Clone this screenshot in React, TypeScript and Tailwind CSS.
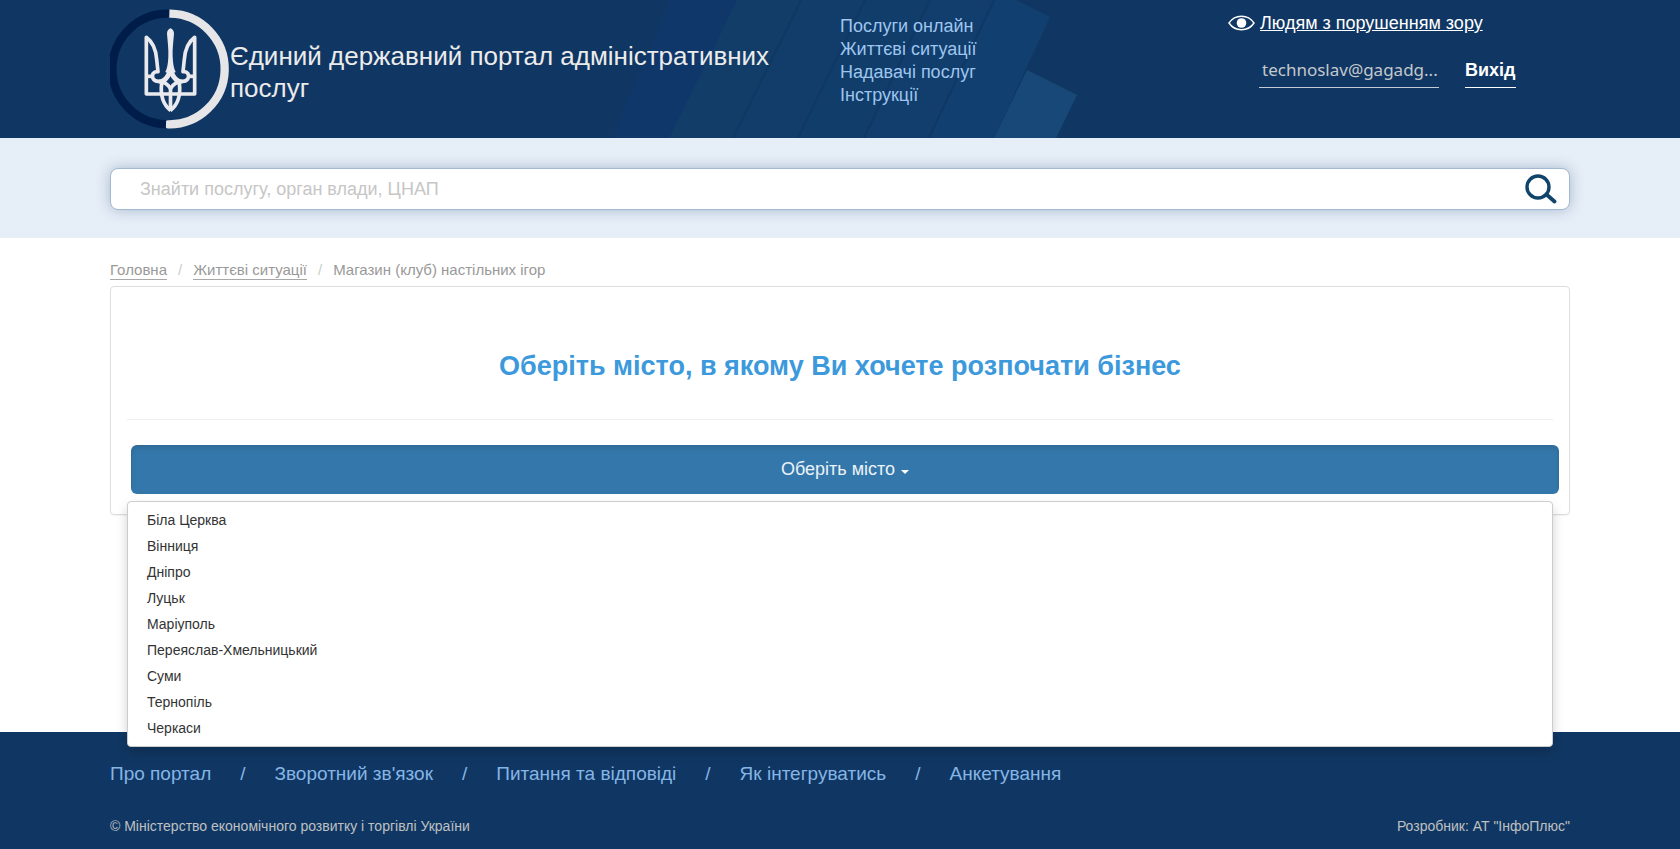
import React, { useState } from 'react'

const headerLinks = [
    'Послуги онлайн',
    'Життєві ситуації',
    'Надавачі послуг',
    'Інструкції',
]

const cities = [
    'Біла Церква',
    'Вінниця',
    'Дніпро',
    'Луцьк',
    'Маріуполь',
    'Переяслав-Хмельницький',
    'Суми',
    'Тернопіль',
    'Черкаси',
]

const footerLinks = [
    'Про портал',
    "Зворотний зв'язок",
    'Питання та відповіді',
    'Як інтегруватись',
    'Анкетування',
]

/* Left half of the trident, the right one is its mirror */
const TridentHalf: React.FC = () => (
    <>
        <path d="M97 216H25V46C44 60 54 86 56 112L60 149C47 147 40 158 45 169C51 181 70 181 81 170C91 159 97 144 97 130" />
        <path d="M25 163H44" />
        <path d="M62 179C78 179 90 187 98 200" />
        <path d="M97 150C93 166 82 174 71 184C67 216 73 246 98 266" />
    </>
)

const Logo: React.FC = () => (
    <svg
        viewBox="60 27 360 360"
        fill="none"
        className="h-[120px] w-[120px] shrink-0"
        aria-hidden="true"
    >
        {/* Ring */}
        <path
            d="M241 41A166 166 0 0 1 235 373"
            stroke="#e6e6e8"
            strokeWidth="25"
            strokeLinecap="round"
        />
        <path
            d="M238 41A166 166 0 0 0 228 373"
            stroke="#001c48"
            strokeWidth="25"
        />
        {/* Trident */}
        <g
            transform="translate(144 66)"
            stroke="#eaeaee"
            strokeWidth="11"
            strokeLinejoin="round"
        >
            <TridentHalf />
            <g transform="matrix(-1 0 0 1 195 0)">
                <TridentHalf />
            </g>
            <path d="M97.5 192V266" />
            <path
                d="M97.5 19C91 21 87 27 87 35C89 60 92 80 91 104C90 124 88 138 82 150L97.5 158L113 150C107 138 105 124 104 104C103 80 106 60 108 35C108 27 104 21 97.5 19Z"
                fill="#eaeaee"
                stroke="none"
            />
        </g>
    </svg>
)

const HeaderPattern: React.FC = () => (
    <svg
        viewBox="0 0 470 138"
        className="absolute top-0 left-1/2 h-[138px] w-[470px] -translate-x-[230px]"
        aria-hidden="true"
    >
        <path d="M60 0H127L59 138H2Z" fill="#0f376a" />
        <path d="M127 0H191L123 138H59Z" fill="#123d69" />
        <path d="M191 0H255L188 138H123Z" fill="#123d6a" />
        <path d="M255 0H320L254 138H188Z" fill="#113d6b" />
        <path d="M320 0H384L319 138H254Z" fill="#113e6d" />
        <path d="M384 0H406L440 17L384 138H319Z" fill="#113f6f" />
        <path d="M417 70L467 95L446 138H384Z" fill="#184878" />
        <path
            d="M191 0L123 138M255 0L188 138M320 0L254 138M384 0L319 138"
            stroke="#0f3864"
            strokeWidth="2"
        />
    </svg>
)

const App: React.FC = () => {
    const [open, setOpen] = useState(true)
    const [city, setCity] = useState('Оберіть місто')

    const onSelectCity = (value: string) => {
        setCity(value)
        setOpen(false)
    }

    return (
        <div className="flex min-h-screen flex-col bg-white font-['Liberation_Sans',Arial,sans-serif] text-[#333333]">
            {/* Header */}
            <header className="relative h-[138px] overflow-hidden bg-[#103763]">
                <HeaderPattern />
                <div className="relative mx-auto flex w-full max-w-[1500px] px-5">
                    <a
                        href="#"
                        className="flex w-1/2 items-center pt-[9px] pr-14 text-[26px] leading-8 text-[#ebebeb]"
                    >
                        <Logo />
                        <span className="pt-1.5">
                            Єдиний державний портал адміністративних послуг
                        </span>
                    </a>
                    <nav className="flex w-1/4 flex-col items-start pt-[15px] text-[18px] leading-[23px] text-[#9fc5ee]">
                        {headerLinks.map((link) => (
                            <a key={link} href="#">
                                {link}
                            </a>
                        ))}
                    </nav>
                    <div className="w-1/4 pt-[11px] pl-[23px] text-[18px] leading-6 text-white">
                        <a href="#" className="flex items-center gap-[5px]">
                            <svg
                                viewBox="0 0 27 16"
                                fill="none"
                                className="h-4 w-[27px]"
                                aria-hidden="true"
                            >
                                <path
                                    d="M1 8C7 -1 20 -1 26 8C20 17 7 17 1 8Z"
                                    stroke="white"
                                    strokeWidth="1.4"
                                />
                                <circle cx="13.5" cy="8" r="4.8" fill="white" />
                            </svg>
                            <span className="whitespace-nowrap underline">
                                Людям з порушенням зору
                            </span>
                        </a>
                        <div className="flex gap-[26px] pt-[23px] pl-[31px]">
                            <a
                                href="#"
                                className="w-[180px] border-b border-[#c3cbd4] pb-[5px] pl-[3px] font-['Noto_Sans',sans-serif] text-[17px] whitespace-nowrap text-[#c4c8cc]"
                            >
                                technoslav@gagadg...
                            </a>
                            <a
                                href="#"
                                className="border-b border-white pb-[5px] font-bold"
                            >
                                Вихід
                            </a>
                        </div>
                    </div>
                </div>
            </header>

            {/* Search */}
            <div className="bg-[#e6eef7] pt-[30px] pb-7">
                <div className="mx-auto w-full max-w-[1500px] px-5">
                    <form className="flex h-[42px] items-center rounded-lg border border-[#a3b8d3] bg-white pr-3 pl-[29px] shadow-[0_0_14px_rgba(60,90,130,0.35)]">
                        <input
                            type="text"
                            aria-label="Пошук"
                            placeholder="Знайти послугу, орган влади, ЦНАП"
                            className="min-w-0 flex-1 text-[18px] outline-none placeholder:text-[#c6c6c6]"
                        />
                        <button type="submit" aria-label="Знайти">
                            <svg
                                viewBox="0 0 32 30"
                                fill="none"
                                stroke="#11446b"
                                className="h-[30px] w-8"
                            >
                                <circle
                                    cx="13"
                                    cy="13"
                                    r="11"
                                    strokeWidth="3.4"
                                />
                                <path
                                    d="M21.5 20.5L29.5 27.5"
                                    strokeWidth="3.8"
                                    strokeLinecap="round"
                                />
                            </svg>
                        </button>
                    </form>
                </div>
            </div>

            <main className="mx-auto w-full max-w-[1500px] flex-1 px-5 pt-[23px]">
                {/* Breadcrumbs */}
                <nav className="flex gap-[11px] text-[15px] leading-[18px] text-[#999999]">
                    <a href="#" className="border-b border-[#a8a8a8]">
                        Головна
                    </a>
                    <span className="text-[#cccccc]">/</span>
                    <a href="#" className="border-b border-[#a8a8a8]">
                        Життєві ситуації
                    </a>
                    <span className="text-[#cccccc]">/</span>
                    <span>Магазин (клуб) настільних ігор</span>
                </nav>

                {/* City picker */}
                <section className="mt-[6px] rounded border border-[#dddddd] px-4 pb-5 shadow-[0_1px_1px_rgba(0,0,0,0.05)]">
                    <h1 className="border-b border-[#eeeeee] pt-[62px] pb-9 text-center text-[27px] leading-[34px] font-bold text-[#3c99dc]">
                        Оберіть місто, в якому Ви хочете розпочати бізнес
                    </h1>
                    <div className="relative mt-[25px]">
                        <div className="-mr-[6px] pl-1">
                            <button
                                type="button"
                                aria-expanded={open}
                                onClick={() => setOpen(!open)}
                                className="flex h-[49px] w-full items-center justify-center gap-[6px] rounded-md bg-[#3478ab] text-[18px] text-[#ebf2f8] shadow-[inset_0_3px_5px_rgba(0,0,0,0.125)]"
                            >
                                {city}
                                <span className="mt-1 border-x-4 border-t-4 border-x-transparent border-t-white"></span>
                            </button>
                        </div>
                        {open && (
                            <ul className="absolute inset-x-0 top-full z-10 mt-[7px] rounded border border-[#cccccc] bg-white py-[5px] text-[14px] leading-[26px] shadow-[0_6px_12px_rgba(0,0,0,0.175)]">
                                {cities.map((name) => (
                                    <li key={name}>
                                        <button
                                            type="button"
                                            onClick={() => onSelectCity(name)}
                                            className="block w-full px-[19px] text-left hover:bg-[#f5f5f5]"
                                        >
                                            {name}
                                        </button>
                                    </li>
                                ))}
                            </ul>
                        )}
                    </div>
                </section>
            </main>

            {/* Footer */}
            <footer className="bg-[#103763]">
                <div className="mx-auto w-full max-w-[1500px] px-5 pt-[30px] pb-[13px]">
                    <nav className="flex gap-[29px] text-[19px] leading-6 text-[#85b5e6]">
                        {footerLinks.map((link, i) => (
                            <React.Fragment key={link}>
                                {i > 0 && <span>/</span>}
                                <a href="#">{link}</a>
                            </React.Fragment>
                        ))}
                    </nav>
                    <div className="flex justify-between pt-[30px] text-[14px] leading-5 text-[#bfc0c2]">
                        <p>© Міністерство економічного розвитку і торгівлі України</p>
                        <p>Розробник: АТ "ІнфоПлюс"</p>
                    </div>
                </div>
            </footer>
        </div>
    )
}

export default App
